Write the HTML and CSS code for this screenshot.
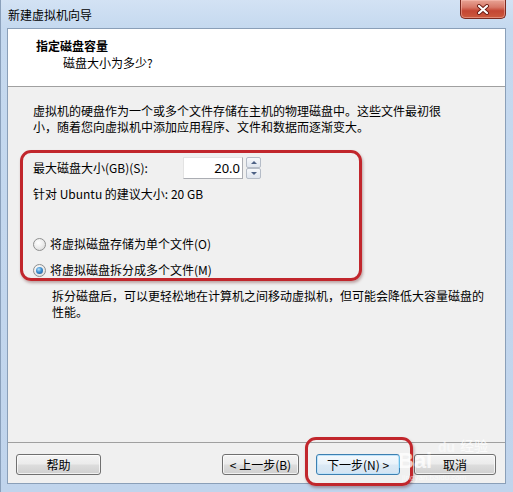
FILE: index.html
```html
<!DOCTYPE html>
<html lang="zh-CN">
<head>
<meta charset="utf-8">
<title>新建虚拟机向导</title>
<link rel="stylesheet" href="styles.css">
</head>
<body>
<div class="window">
  <div class="titlebar">
    <span class="title">新建虚拟机向导</span>
    <span class="close">
      <svg width="14" height="11" viewBox="0 0 14 11">
        <path d="M3 2 L11 9 M11 2 L3 9" stroke="#6b1a12" stroke-width="4" stroke-linecap="round"/>
        <path d="M3 2 L11 9 M11 2 L3 9" stroke="#ffffff" stroke-width="2.2" stroke-linecap="round"/>
      </svg>
    </span>
  </div>
  <div class="client">
    <div class="header">
      <div class="h-title">指定磁盘容量</div>
      <div class="h-sub">磁盘大小为多少?</div>
    </div>
    <div class="content">
      <p class="intro"><span class="line">虚拟机的硬盘作为一个或多个文件存储在主机的物理磁盘中。这些文件最初很</span><span class="line">小，随着您向虚拟机中添加应用程序、文件和数据而逐渐变大。</span></p>
      <div class="highlight">
        <div class="size-row">
          <span class="label">最大磁盘大小(GB)(S):</span>
          <span class="spin-input">20.0</span>
          <span class="spin-btns">
            <span class="spin-btn"><span class="arrow-up"></span></span>
            <span class="spin-btn"><span class="arrow-down"></span></span>
          </span>
        </div>
        <div class="recommend">针对 Ubuntu 的建议大小: 20 GB</div>
        <div class="radio-row first"><span class="radio"></span>将虚拟磁盘存储为单个文件(O)</div>
        <div class="radio-row second"><span class="radio checked"></span>将虚拟磁盘拆分成多个文件(M)</div>
      </div>
      <p class="note"><span class="line">拆分磁盘后，可以更轻松地在计算机之间移动虚拟机，但可能会降低大容量磁盘的</span><span class="line">性能。</span></p>
    </div>
    <div class="footer">
      <span class="btn help">帮助</span>
      <span class="btn back">&lt; 上一步(B)</span>
      <span class="next-wrap">
        <span class="btn next">下一步(N) &gt;</span>
        <span class="ring"></span>
      </span>
      <span class="btn cancel">取消</span>
      <div class="watermark">
        <span class="wm-bai">Bai</span><span class="wm-du">du</span><span class="wm-jy">经验</span>
        <span class="wm-url">jingyan.baidu.com</span>
      </div>
    </div>
  </div>
</div>
</body>
</html>
```

FILE: styles.css
```css
* { box-sizing: border-box; }

html, body {
  margin: 0;
  padding: 0;
  background: #c3d7ee;
}

body {
  font-family: "Noto Sans CJK SC", "Noto Sans", sans-serif;
  font-size: 12px;
  color: #000;
}

.window {
  width: 513px;
  height: 492px;
  display: flex;
  flex-direction: column;
  background: linear-gradient(180deg, #d3e2f4 0px, #c5d9ef 28px, #c0d4ec 100%);
  border-left: 1px solid #8aa0bb;
}

.titlebar {
  height: 28px;
  display: flex;
  align-items: flex-start;
  flex-shrink: 0;
}

.title {
  margin-left: 7px;
  line-height: 30px;
  color: #000;
}

.close {
  margin-left: auto;
  margin-right: 7px;
  width: 46px;
  height: 19px;
  display: flex;
  align-items: center;
  justify-content: center;
  border: 1px solid #7a2a20;
  border-top: none;
  border-radius: 0 0 5px 5px;
  background: linear-gradient(180deg, #e8a495 0%, #d77868 40%, #c44633 60%, #cc5a3e 100%);
  box-shadow: inset 0 0 0 1px rgba(255, 200, 190, 0.45);
}

.client {
  flex: 1;
  margin: 0 7px 8px 6px;
  border: 1px solid #8a9fb8;
  background: #f0f0f0;
  display: flex;
  flex-direction: column;
}

.header {
  height: 58px;
  background: #fff;
  border-bottom: 1px solid #a0a0a0;
  padding: 9px 0 0 28px;
  flex-shrink: 0;
}

.h-title {
  font-weight: bold;
  line-height: 16px;
}

.h-sub {
  line-height: 16px;
  margin: 1px 0 0 27px;
}

.content {
  flex: 1;
  padding-top: 16px;
}

.line {
  display: block;
  height: 16px;
  line-height: 16px;
  white-space: nowrap;
}

.intro {
  margin: 0 0 0 25px;
}

.highlight {
  margin: 15px 0 0 12px;
  width: 342px;
  border: 3px solid #c1262c;
  border-radius: 11px;
  padding: 4px 0 0 10px;
  box-shadow: 1px 2px 3px rgba(90, 20, 20, 0.35);
}

.size-row {
  display: flex;
  align-items: center;
  height: 22px;
}

.label {
  width: 150px;
  line-height: 16px;
}

.spin-input {
  width: 60px;
  height: 22px;
  background: #fff;
  border: 1px solid #abadb3;
  border-top-color: #e3e3e3;
  border-left-color: #e3e3e3;
  text-align: right;
  padding-right: 2px;
  line-height: 20px;
  font-family: "Noto Sans", "Noto Sans CJK SC", sans-serif;
  font-size: 13px;
}

.spin-btns {
  margin-left: 3px;
  width: 15px;
  height: 22px;
  display: flex;
  flex-direction: column;
}

.spin-btn {
  flex: 1;
  border: 1px solid #b5bcc7;
  border-radius: 2px;
  background: linear-gradient(180deg, #f6f8fb, #dfe5ee);
  display: flex;
  align-items: center;
  justify-content: center;
}

.arrow-up, .arrow-down {
  width: 0;
  height: 0;
  border-left: 3px solid transparent;
  border-right: 3px solid transparent;
}

.arrow-up { border-bottom: 3px solid #4d6185; }
.arrow-down { border-top: 3px solid #4d6185; }

.recommend {
  margin-top: 7px;
  line-height: 16px;
}

.radio-row {
  display: flex;
  align-items: center;
  line-height: 16px;
  white-space: nowrap;
}

.radio-row.first { margin-top: 34px; }
.radio-row.second { margin-top: 10px; }

.radio {
  width: 13px;
  height: 13px;
  margin-right: 4px;
  border-radius: 50%;
  border: 1px solid #8e8f8f;
  background: radial-gradient(circle at 40% 35%, #ffffff 0%, #eeeeee 45%, #d4d4d4 100%);
  display: flex;
  align-items: center;
  justify-content: center;
  flex-shrink: 0;
}

.radio.checked::after {
  content: "";
  width: 7px;
  height: 7px;
  border-radius: 50%;
  background: radial-gradient(circle at 40% 35%, #b7e2fb 0%, #3d8fd0 45%, #1b4f8a 100%);
}

.note {
  margin: 7px 0 0 44px;
}

.footer {
  height: 41px;
  border-top: 1px solid #a0a0a0;
  display: flex;
  align-items: flex-start;
  padding: 11px 0 0 8px;
  flex-shrink: 0;
  position: relative;
}

.btn {
  display: flex;
  align-items: center;
  justify-content: center;
  height: 21px;
  border: 1px solid #707070;
  border-radius: 3px;
  background: linear-gradient(180deg, #f4f4f4 0%, #ebebeb 48%, #dddddd 52%, #cfcfcf 100%);
  box-shadow: inset 0 0 0 1px rgba(255, 255, 255, 0.7);
  white-space: nowrap;
}

.help { width: 85px; }
.back { width: 77px; margin-left: 121px; }

.next-wrap {
  position: relative;
  margin-left: 17px;
}

.next {
  width: 84px;
  border-color: #3c7fb1;
  background: linear-gradient(180deg, #f4f9fd 0%, #e8f2fa 48%, #dbe9f5 52%, #d3e4f2 100%);
  box-shadow: inset 0 0 0 1px #bfe3fa;
}

.ring {
  position: absolute;
  left: -11px;
  top: -17px;
  width: 108px;
  height: 49px;
  border: 3px solid #c1262c;
  border-radius: 11px;
  box-shadow: 1px 2px 3px rgba(90, 20, 20, 0.35);
}

.cancel { width: 82px; margin-left: 14px; }

.watermark {
  position: absolute;
  left: 386px;
  top: -6px;
  width: 110px;
  height: 46px;
  color: rgba(255, 255, 255, 0.75);
  pointer-events: none;
}

.wm-bai {
  position: absolute;
  left: 4px;
  top: 12px;
  font-family: "Liberation Sans", sans-serif;
  font-weight: bold;
  font-size: 22px;
  line-height: 24px;
}

.wm-du {
  position: absolute;
  left: 44px;
  top: 2px;
  font-family: "Liberation Sans", sans-serif;
  font-weight: bold;
  font-size: 14px;
  line-height: 16px;
  color: rgba(255, 255, 255, 0.55);
}

.wm-jy {
  position: absolute;
  left: 66px;
  top: 0px;
  font-size: 14px;
  line-height: 16px;
}

.wm-url {
  position: absolute;
  left: 8px;
  top: 36px;
  font-family: "Liberation Sans", sans-serif;
  font-size: 8px;
  line-height: 9px;
  color: rgba(255, 255, 255, 0.6);
}
```
